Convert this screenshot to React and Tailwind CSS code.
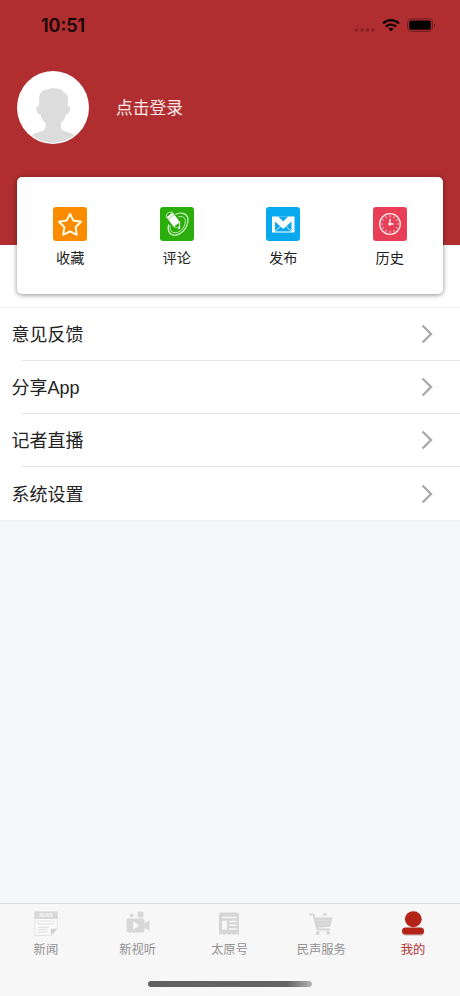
const StarIcon = () => (
  <svg viewBox="0 0 34 34" className="size-[34px]">
    <rect width="34" height="34" rx="3" fill="#fb8c00" />
    <path
      d="M17 6.800l3.400 6.800 7.600 1.200-5.400 5.400 1.200 7.600-6.800-3.400-6.800 3.400 1.200-7.600L6 14.800l7.600-1.200z"
      fill="none"
      stroke="#fffbe6"
      strokeWidth="2"
      strokeLinejoin="round"
    />
  </svg>
);

const CommentIcon = () => (
  <svg viewBox="0 0 34 34" className="size-[34px]">
    <rect width="34" height="34" rx="3" fill="#2bae0c" />
    <g fill="none" stroke="#e6fbe0">
      <path d="M15.500 7.500C21 4.500 27.800 6.500 28 12.500c.2 7.500-6 15-12.500 15.700C9.500 28.800 7 23.500 8.700 17.500" strokeWidth="1.100" />
      <path d="M18.500 9.800c4.300-1 7.200 1 6.800 5.200C24.700 21 19.500 26 15 25.800c-4-.3-5.500-3.300-4.800-7.300" strokeWidth=".8" />
      <path d="M6.500 10.500C5.500 7 8 4.500 12.500 5.300" strokeWidth=".8" />
    </g>
    <path d="M6.500 10.200l6.300-4.600 7.400 9.900-.2 6.400-6.200-2z" fill="#fff" />
    <path d="M14.300 19.300l5-3.600-.1 4.600-1.500.7z" fill="#2bae0c" />
    <path d="M17.600 20.400l2-1.700.4 3.200z" fill="#fff" />
    <path d="M8 12.300l6.300-4.700" stroke="#2bae0c" strokeWidth=".5" />
  </svg>
);

const MailIcon = () => (
  <svg viewBox="0 0 34 34" className="size-[34px]">
    <rect width="34" height="34" rx="3" fill="#08a9ef" />
    <rect x="6" y="9.500" width="22.500" height="16" fill="#fff" />
    <path d="M9 14.500v10h16.500v-10L17.200 22z" fill="#08a9ef" />
    <path d="M12.300 9.500h9.800l-4.900 5z" fill="#08a9ef" />
    <path d="M9 24.300l5.800-5.200M25.500 24.300l-5.800-5.200" fill="none" stroke="#fff" strokeWidth=".8" />
  </svg>
);

const TICKS = [0, 30, 60, 90, 120, 150, 180, 210, 240, 270, 300, 330];

const ClockIcon = () => (
  <svg viewBox="0 0 34 34" className="size-[34px]">
    <rect width="34" height="34" rx="3" fill="#e83e56" />
    <g fill="none" stroke="#ffe9ec">
      <circle cx="17" cy="17" r="10.300" strokeWidth="1.300" />
      {TICKS.map((deg) => (
        <path key={deg} d="M17 8.300v1.800" strokeWidth=".9" transform={`rotate(${deg} 17 17)`} />
      ))}
      <path d="M17 11.800v6.700M15.200 17h5.600" strokeWidth="1.400" />
    </g>
    <circle cx="17" cy="17" r="1.400" fill="#ffe9ec" />
  </svg>
);

const NewsIcon = () => (
  <svg viewBox="0 0 24 26" className="h-[26px] w-6">
    <path d="M.8 1h22.400v17l-6 6.400H.8z" fill="#fbfbfb" stroke="#dedede" strokeWidth=".8" />
    <path d="M.5.500h23v7.500H.5z" fill="#d8d8d8" />
    <text
      x="12"
      y="5.800"
      textAnchor="middle"
      fontSize="4.500"
      fontWeight="700"
      fill="#f8f8f8"
      fontFamily="Liberation Sans, sans-serif"
    >
      NEWS
    </text>
    <rect x="3.500" y="10" width="17" height="3" rx="1" fill="none" stroke="#dcdcdc" strokeWidth=".8" />
    <path d="M4 16.200h11M4 18.500h9M3.500 21h10" stroke="#dcdcdc" strokeWidth="1.100" />
    <path d="M16.800 24.500v-6.700h6.700z" fill="#d2d2d2" />
  </svg>
);

const VideoIcon = () => (
  <svg viewBox="0 0 24 26" className="h-[26px] w-6" fill="#d8d8d8">
    <circle cx="5.800" cy="4.300" r="1.900" />
    <circle cx="14.500" cy="3.500" r="3.200" />
    <rect x=".5" y="7.500" width="18" height="14" rx="2.200" />
    <path d="M18 12.500l5.500-2.800v9.800L18 16.800z" />
    <path d="M7.200 10.300v8.400l6.300-4.200z" fill="#f8f8f8" />
  </svg>
);

const PaperIcon = () => (
  <svg viewBox="0 0 24 26" className="h-[26px] w-6">
    <path
      d="M3.500 1.500h17a1.500 1.500 0 0 1 1.500 1.500v21l-2.500-1.600-2.500 1.600-2.500-1.600-2.500 1.600-2.500-1.600L7 24l-2.500-1.600L2 24V3a1.500 1.500 0 0 1 1.500-1.500z"
      fill="#d6d6d6"
    />
    <path d="M5 6.500h14.500M12 10.500h7.500M12 14.200h7.500M12 18h7.500" stroke="#f7f7f7" strokeWidth="1.600" />
    <path d="M5 9.700h5v9H5z" fill="#f7f7f7" />
  </svg>
);

const CartIcon = () => (
  <svg viewBox="0 0 24 26" className="h-[26px] w-6" fill="#d6d6d6">
    <path d="M.8 3.500h3.700l3.800 15h12" fill="none" stroke="#d6d6d6" strokeWidth="1.800" strokeLinecap="round" strokeLinejoin="round" />
    <path d="M5.500 6.500h18L21 15.800 8 16.800z" />
    <path d="M13 4.500l2.800-3 2.800 3z" />
    <path d="M7.500 9.500h14.500M8 12.800h13" stroke="#e8e8e8" strokeWidth=".5" />
    <circle cx="8.800" cy="22" r="1.900" />
    <circle cx="19" cy="22" r="1.900" />
  </svg>
);

const ProfileIcon = () => (
  <svg viewBox="0 0 24 26" className="h-[26px] w-6">
    <rect x="1.300" y="17.300" width="22" height="7.500" rx="3.700" fill="#cfc6c4" />
    <ellipse cx="12.300" cy="8.200" rx="8.400" ry="8" fill="#b42318" />
    <rect x="1" y="16.400" width="22" height="7.200" rx="3.600" fill="#b42318" />
  </svg>
);

const Avatar = () => (
  <svg viewBox="0 0 72 73" className="h-[73px] w-[72px] shrink-0">
    <clipPath id="avatar">
      <ellipse cx="36" cy="36.500" rx="35" ry="35.500" />
    </clipPath>
    <ellipse cx="36" cy="36.500" rx="36" ry="36.500" fill="#fff" />
    <path
      clipPath="url(#avatar)"
      d="M22 35c-3-.5-3.500 4-1.500 6.500 1 1.500 2.200 1.800 3 2 .8 4 2.500 6.500 5 8.500.5 3 .2 5.500-1.500 7-2.500 2-7.500 2.200-11.500 5v11h42V64c-4-2.800-9.500-3-12-5-1.700-1.500-2-4-1.500-7 2.500-2 4.200-4.500 5-8.500.8-.2 2-.5 3-2 2-2.500 1.500-7-1.300-6.500 1-8 .3-12.500-4.200-14-2-3.500-7-4-11.500-3.700-1.500 0-2.500.2-3.500 1-6 .2-9.500 4-9.300 9.200z"
      fill="#dcdcdc"
    />
  </svg>
);

const StatusBar = () => (
  <div className="flex h-[52px] justify-between pl-[41px] pr-[24px]">
    <span className="mt-[14px] font-[Inter,sans-serif] text-[18px] font-semibold leading-6 text-[#160505]">
      10:51
    </span>
    <div className="mt-[18px] flex h-[14px] items-center">
      <svg viewBox="0 0 22 14" className="mr-[6px] h-[14px] w-[22px]" fill="#852326">
        <circle cx="2.500" cy="12" r="1.800" />
        <circle cx="8" cy="12" r="1.800" />
        <circle cx="13.500" cy="12" r="1.800" />
        <circle cx="19" cy="12" r="1.800" />
      </svg>
      <svg viewBox="0 0 18 14" className="mr-[7px] h-[14px] w-[18px]" fill="none" stroke="#0b0202" strokeWidth="2.300">
        <path d="M1 5.400c4.500-4.300 11.500-4.300 16 0M4 8.600c3-2.700 7-2.700 10 0" />
        <path d="M9 13.300l-2.600-2.600c1.500-1.300 3.700-1.300 5.200 0z" fill="#0b0202" stroke="none" />
      </svg>
      <svg viewBox="0 0 29 14" className="h-[14px] w-[29px]">
        <rect x=".6" y=".8" width="25" height="12.600" rx="3.800" fill="none" stroke="#6d1c1e" />
        <rect x="2.200" y="2.400" width="21.800" height="9.400" rx="2.400" fill="#050000" />
        <path d="M27 5c1.800.7 1.800 3.800 0 4.500z" fill="#6d1c1e" />
      </svg>
    </div>
  </div>
);

const shortcuts = [
  { label: "收藏", Icon: StarIcon },
  { label: "评论", Icon: CommentIcon },
  { label: "发布", Icon: MailIcon },
  { label: "历史", Icon: ClockIcon },
];

const menu = ["意见反馈", "分享App", "记者直播", "系统设置"];

const tabs = [
  { label: "新闻", Icon: NewsIcon },
  { label: "新视听", Icon: VideoIcon },
  { label: "太原号", Icon: PaperIcon },
  { label: "民声服务", Icon: CartIcon },
  { label: "我的", Icon: ProfileIcon, active: true },
];

const MenuRow = ({ label, last }) => (
  <li>
    <button className="flex h-[52.300px] w-full items-center justify-between pl-[11.500px] pr-[27px] text-[18px] text-[#222]">
      <span className="pt-[3px] font-['Liberation_Sans','Noto_Sans_CJK_SC',sans-serif]">{label}</span>
      <svg viewBox="0 0 12 20" className="h-5 w-3" fill="none" stroke="#aaa" strokeWidth="2.400">
        <path d="M1.500 1.500L10 10l-8.500 8.500" />
      </svg>
    </button>
    <div className={last ? "h-px bg-[#eceef0]" : "ml-[22px] h-px bg-[#e6e6e6]"} />
  </li>
);

export default function App() {
  return (
    <div className="flex h-[996px] w-[460px] flex-col overflow-hidden bg-[#f5f6f8] font-['Noto_Sans_CJK_SC',sans-serif]">
      <header className="h-[245px] shrink-0 bg-[#b02e30]">
        <StatusBar />
        <div className="mt-[19px] flex items-center pl-[17px]">
          <Avatar />
          <span className="ml-[27px] text-[16.800px] text-[#fbe9e9]">点击登录</span>
        </div>
      </header>

      <section className="h-[62.500px] shrink-0 border-b border-[#f1f1f1] bg-white px-[17px]">
        <div className="relative -mt-[68px] grid h-[117px] grid-cols-4 rounded-[5px] bg-white pt-[30px] shadow-[0_1px_5px_rgba(0,0,0,0.450)]">
          {shortcuts.map(({ label, Icon }) => (
            <div key={label} className="flex flex-col items-center gap-[6px]">
              <Icon />
              <span className="text-[14.200px] leading-5 text-[#222]">{label}</span>
            </div>
          ))}
        </div>
      </section>

      <ul className="shrink-0 bg-white">
        {menu.map((label, i) => (
          <MenuRow key={label} label={label} last={i === menu.length - 1} />
        ))}
      </ul>

      <nav className="mt-auto flex h-[93px] shrink-0 flex-col items-center border-t border-[#d7dadd] bg-[#f7f7f7]">
        <div className="grid w-full grid-cols-5 pr-px pt-[7px]">
          {tabs.map(({ label, Icon, active }) => (
            <div key={label} className="flex flex-col items-center">
              <Icon />
              <span className={active ? "text-[12.300px] leading-[24px] text-[#b13431]" : "text-[12.300px] leading-[24px] text-[#929292]"}>
                {label}
              </span>
            </div>
          ))}
        </div>
        <div className="mt-auto mb-[9px] h-[6px] w-[164px] rounded-full bg-linear-to-r from-[#606060] via-[#666] via-85% to-[#b5b5b5]" />
      </nav>
    </div>
  );
}
